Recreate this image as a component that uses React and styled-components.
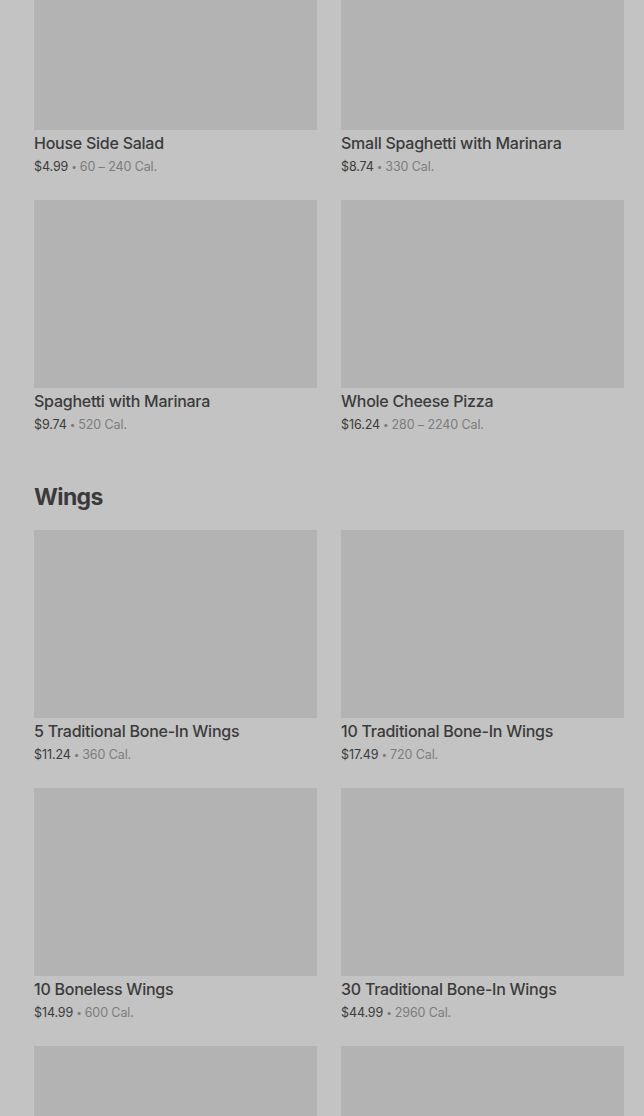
import React from 'react'
import styled, { createGlobalStyle } from 'styled-components'

const GlobalStyle = createGlobalStyle`
    html, body {
        margin: 0;
        padding: 0;
        background: #c3c3c3;
        font-family: Inter, "Noto Sans", "Liberation Sans", sans-serif;
    }
`;

const Page = styled.main`
    width: 644px;
    height: 1116px;
    overflow: hidden;
    box-sizing: border-box;
    padding: 0 20px 0 34px;
`;

const Scroller = styled.div`
    margin-top: -58px;
`;

const Section = styled.section`
    display: flex;
    flex-direction: column;
`;

const Heading = styled.h2`
    margin: 46px 0 17px;
    font-size: 23px;
    line-height: 32px;
    font-weight: 700;
    color: #3a3a3a;
    letter-spacing: -0.6px;
`;

const Grid = styled.ul`
    list-style: none;
    margin: 0;
    padding: 0;
    display: grid;
    grid-template-columns: 283px 283px;
    column-gap: 24px;
    row-gap: 23px;
`;

const Card = styled.li`
    display: flex;
    flex-direction: column;
`;

const Thumb = styled.div`
    height: 188px;
    background: #b3b3b3;
`;

const Title = styled.div`
    margin-top: 1px;
    height: 24px;
    font-size: 16px;
    line-height: 24px;
    font-weight: 500;
    color: #3b3b3b;
    letter-spacing: -0.25px;
    white-space: nowrap;
`;

const Meta = styled.div`
    margin-top: 2px;
    height: 20px;
    font-size: 12.5px;
    line-height: 20px;
    color: #7c7c7c;
    letter-spacing: -0.1px;
    white-space: nowrap;
`;

const Price = styled.span`
    color: #3b3b3b;
`;

const Dot = styled.span`
    display: inline-block;
    font-size: 10px;
    line-height: 1;
    margin: 0 3px;
    transform: translateY(-1px);
`;

const sections = [
    {
        items: [
            { name: 'House Side Salad', price: '$4.99', cal: '60 – 240 Cal.' },
            { name: 'Small Spaghetti with Marinara', price: '$8.74', cal: '330 Cal.' },
            { name: 'Spaghetti with Marinara', price: '$9.74', cal: '520 Cal.' },
            { name: 'Whole Cheese Pizza', price: '$16.24', cal: '280 – 2240 Cal.' },
        ],
    },
    {
        title: 'Wings',
        items: [
            { name: '5 Traditional Bone-In Wings', price: '$11.24', cal: '360 Cal.' },
            { name: '10 Traditional Bone-In Wings', price: '$17.49', cal: '720 Cal.' },
            { name: '10 Boneless Wings', price: '$14.99', cal: '600 Cal.' },
            { name: '30 Traditional Bone-In Wings', price: '$44.99', cal: '2960 Cal.' },
            { id: 'more-1' },
            { id: 'more-2' },
        ],
    },
];

const MenuItem = ({ name, price, cal }) => (
    <Card>
        <Thumb />
        {name && (
            <>
                <Title>{name}</Title>
                <Meta><Price>{price}</Price><Dot>•</Dot>{cal}</Meta>
            </>
        )}
    </Card>
);

export default function App() {
    return (
        <>
            <GlobalStyle />
            <Page>
                <Scroller>
                    {sections.map((s, i) => (
                        <Section key={i}>
                            {s.title && <Heading>{s.title}</Heading>}
                            <Grid>
                                {s.items.map((it) => <MenuItem key={it.id || it.name} {...it} />)}
                            </Grid>
                        </Section>
                    ))}
                </Scroller>
            </Page>
        </>
    )
}
